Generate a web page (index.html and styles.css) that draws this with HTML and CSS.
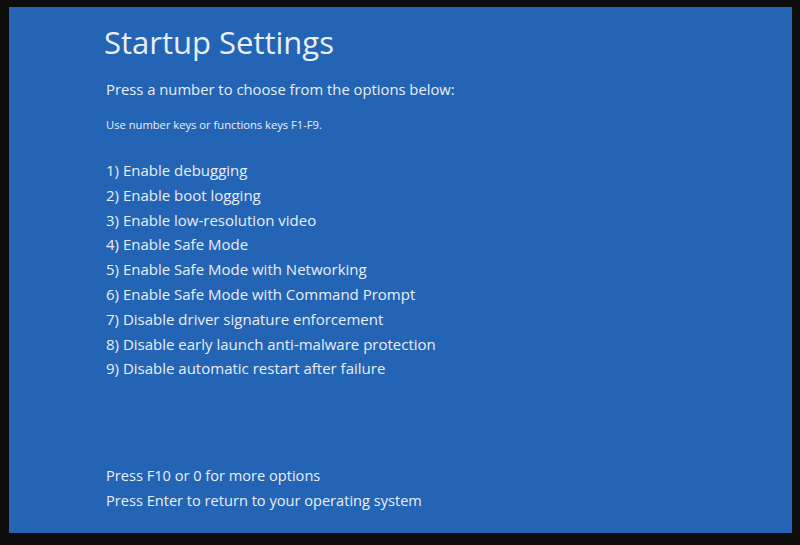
FILE: index.html
```html
<!DOCTYPE html>
<html>
<head>
<meta charset="utf-8">
<link rel="stylesheet" href="styles.css">
</head>
<body>
<div class="screen">
  <h1 class="title">Startup Settings</h1>
  <p class="lead">Press a number to choose from the options below:</p>
  <p class="hint">Use number keys or functions keys F1-F9.</p>
  <ol class="options">
    <li>1) Enable debugging</li>
    <li>2) Enable boot logging</li>
    <li>3) Enable low-resolution video</li>
    <li>4) Enable Safe Mode</li>
    <li>5) Enable Safe Mode with Networking</li>
    <li>6) Enable Safe Mode with Command Prompt</li>
    <li>7) Disable driver signature enforcement</li>
    <li>8) Disable early launch anti-malware protection</li>
    <li>9) Disable automatic restart after failure</li>
  </ol>
  <div class="footer">
    <p class="line">Press F10 or 0 for more options</p>
    <p class="line">Press Enter to return to your operating system</p>
  </div>
</div>
</body>
</html>
```

FILE: styles.css
```css
html, body {
  margin: 0;
  padding: 0;
  background: #0d0d0d;
  width: 800px;
  height: 545px;
  overflow: hidden;
}
.screen {
  margin: 7px 8px 12px 9px;
  height: 526px;
  box-sizing: border-box;
  background: #2464b4;
  color: #e9eef7;
  font-family: "Open Sans", "Noto Sans", sans-serif;
  padding: 15px 0 0 95px;
  display: flex;
  flex-direction: column;
}
.title {
  margin: 0;
  font-weight: 400;
  font-size: 31px;
  line-height: 40px;
}
.lead {
  margin: 17px 0 0 2px;
  font-size: 14.8px;
  line-height: 20px;
}
.hint {
  margin: 19px 0 0 2px;
  font-size: 11.2px;
  line-height: 14px;
}
.options {
  list-style: none;
  margin: 26px 0 0 2px;
  padding: 0;
  font-size: 15px;
  line-height: 24.8px;
}
.footer {
  margin-top: auto;
  padding-bottom: 21px;
  margin-left: 2px;
}
.line {
  margin: 0;
  font-size: 14.6px;
  line-height: 24.5px;
}
```
